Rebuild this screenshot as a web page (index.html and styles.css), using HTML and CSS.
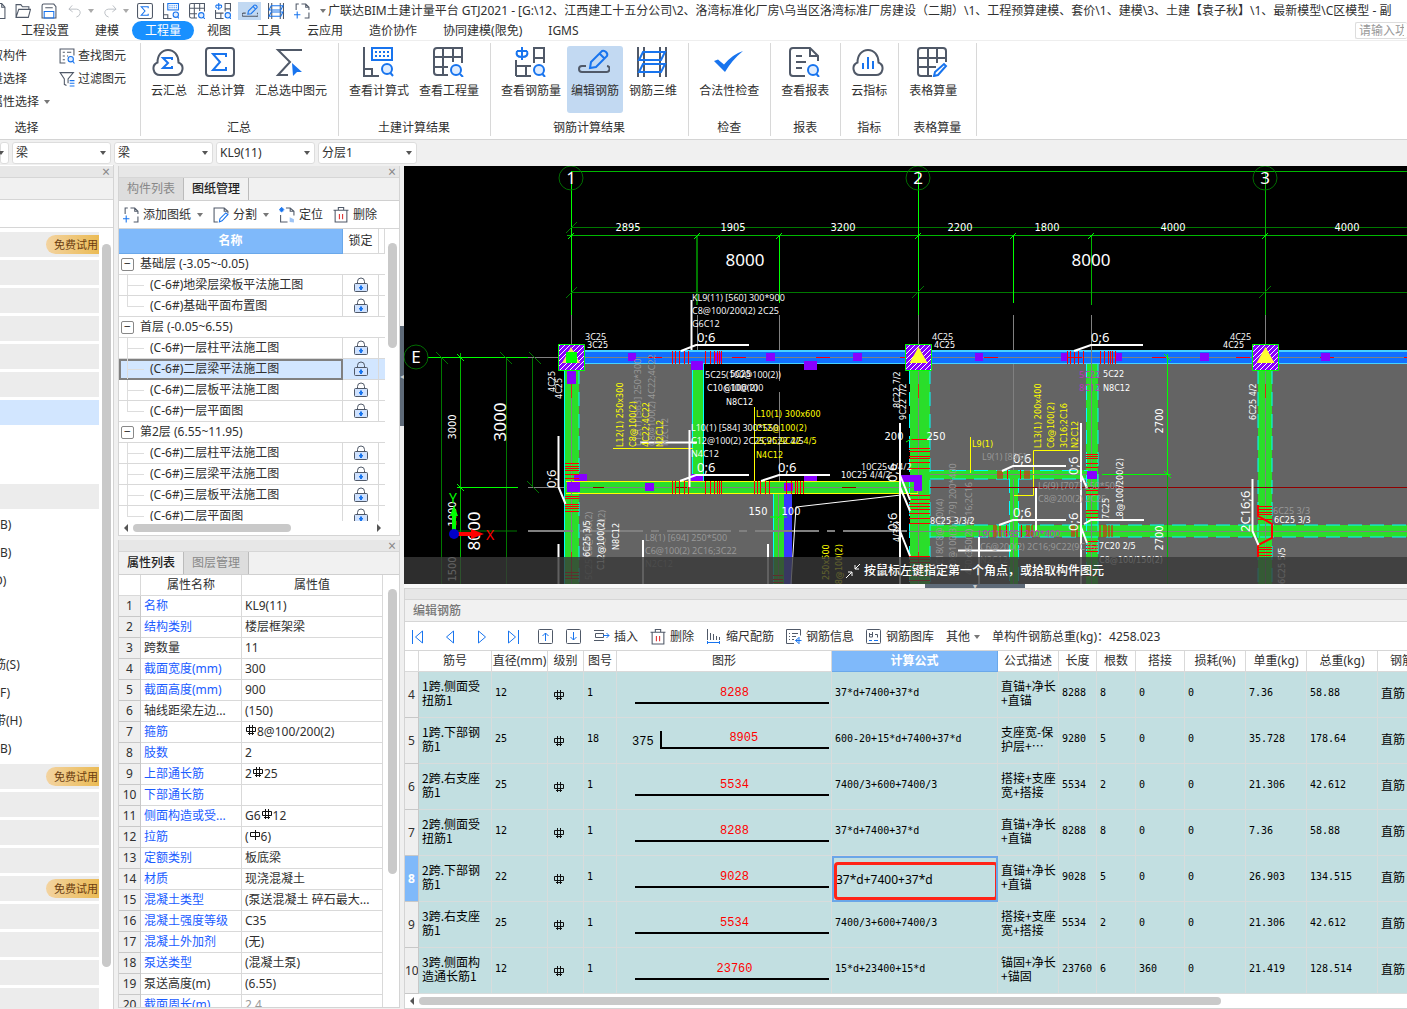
FILE: index.html
```html
<!DOCTYPE html>
<html lang="zh-CN">
<head>
    <meta charset="UTF-8">
    <meta name="viewport" content="width=device-width, initial-scale=1.0">
    <title>广联达BIM土建计量平台 GTJ2021</title>
    <link rel="stylesheet" href="styles.css">
</head>
<body>
    <!-- shared icons -->
    <svg class="defs" width="0" height="0">
        <symbol id="i-cloudsum" viewBox="0 0 32 30"><path class="d" d="M8 28a6.500 6.500 0 0 1-2.500-12.500C5.500 8 10 3 16 3s10.500 5 10.500 12.500A6.500 6.500 0 0 1 24 28z"/><path class="b" d="M20 13v-2h-9l5 5-5 5h9v-2"/></symbol>
        <symbol id="i-sigma" viewBox="0 0 30 30"><rect class="d" x="1" y="1" width="28" height="28" rx="3"/><path class="b" d="M21 10V7H8l7 8-7 8h13v-3"/></symbol>
        <symbol id="i-sumsel" viewBox="0 0 30 30"><path class="d" d="M27 3H3l12 12L3 28h10"/><path class="bf" d="M17 16l10 9-5 0-4 4z"/></symbol>
        <symbol id="i-formula" viewBox="0 0 30 30"><path class="d" d="M1 0v29h8v-7H1M9 29h7"/><rect class="b" x="9" y="1" width="20" height="12"/><path class="b dot" d="M12 5h15M12 9h15"/><circle class="lens" cx="24" cy="22" r="5"/><path class="b" d="M27.500 26l2.500 3"/></symbol>
        <symbol id="i-qty" viewBox="0 0 30 30"><path class="d" d="M15 28H4q-3 0-3-3V4q0-3 3-3h25v15M1 10h28M1 20h14M10 1v27M20 1v14"/><circle class="lens" cx="23" cy="23" r="5"/><path class="b" d="M27 27l3 3"/></symbol>
        <symbol id="i-rebar" viewBox="0 0 30 30"><path class="d" d="M19 16V1h10v15M19 11h10M1 13v16M1 19h15M1 29h15M11 19v10"/><path class="b" d="M7 0v13M2 4q-2 6 5 6 7 0 5-6M2 4h10"/><circle class="lens" cx="24" cy="23" r="5"/><path class="b" d="M27.500 27l2.500 3"/></symbol>
        <symbol id="i-edit" viewBox="0 0 30 30"><path class="d" d="M7 19H3a3 3 0 0 0 0 6h24a3 3 0 0 0 1-6"/><path class="b" d="M11 21l1-6L23 4q2-1 4 1t1 4L17 20zM21 7l5 5"/></symbol>
        <symbol id="i-three" viewBox="0 0 30 30"><path class="d" d="M1 0v30M7 0v30M23 0v30M29 0v30"/><path class="b" d="M6 5h22l-4 8H2zM6 17h22l-4 8H2z"/></symbol>
        <symbol id="i-check" viewBox="0 0 32 30"><path class="bf" d="M2 14l4-1.500 6 5Q21 7 31 4 20 13 13 25z"/></symbol>
        <symbol id="i-report" viewBox="0 0 30 30"><path class="d" d="M16 29H4q-3 0-3-3V4q0-3 3-3h17l8 8v5M21 1v8h8M7 9h6M7 15h10M7 21h6"/><circle class="lens" cx="24" cy="23" r="5"/><path class="b" d="M27.500 27l2.500 3"/></symbol>
        <symbol id="i-cloudbar" viewBox="0 0 32 30"><path class="d" d="M8 28a6.500 6.500 0 0 1-2.500-12.500C5.500 8 10 3 16 3s10.500 5 10.500 12.500A6.500 6.500 0 0 1 24 28z"/><path class="b" d="M11 16v6M16 10v12M21 14v8"/></symbol>
        <symbol id="i-tablecalc" viewBox="0 0 30 30"><path class="d" d="M15 29H4q-3 0-3-3V4q0-3 3-3h22q3 0 3 3v11M1 11h28M1 20h18M11 1v28M20 1v15"/><path class="b" d="M17 29l1-4 9-8 2 2-8 9z"/></symbol>
        <symbol id="i-adddoc" viewBox="0 0 30 30"><path class="d" d="M4 13V2h5M14 2h8l6 6v5M22 2v6h6M28 18v10h-8"/><path class="b" d="M0 22h12M6 16v13"/></symbol>
        <symbol id="i-split" viewBox="0 0 30 30"><path class="d" d="M9 28H2V2h19l7 6v4M21 2v6h7"/><path class="b" d="M12 28l1-6L24 11l4 3-11 12z"/></symbol>
        <symbol id="i-locate" viewBox="0 0 30 30"><path class="d" d="M3 15v13h13M13 2h8l7 6v8M21 2v6h7"/><path class="b" d="M5 0v10M0 5h10M2 2l6 6M8 2l-6 6"/><path class="lb" d="M20 28v-9l8 4v6z"/></symbol>
        <symbol id="i-trash" viewBox="0 0 30 30"><path class="d" d="M1 6h28M10 5V1h10v4M4 7v21h22V7"/><path class="r" d="M12 13v10M18 13v10"/></symbol>
        <symbol id="i-find" viewBox="0 0 30 30"><path class="d" d="M12 28H2V2h26v12M7 8h4M15 8h8M7 15h4M15 15h2M7 22h4"/><circle class="lens" cx="22" cy="21" r="5"/><path class="b" d="M26 25l3 4"/></symbol>
        <symbol id="i-filter" viewBox="0 0 30 30"><path class="d" d="M14 27l-4-2V15L2 3h25L17 15v8"/><path class="b" d="M20 18h9M20 23h9M20 28h9"/></symbol>
        <symbol id="i-open" viewBox="0 0 30 30"><path class="d" d="M2 27V3h9l3 4h12v5M2 27L7 12h22l-4 15z"/></symbol>
        <symbol id="i-save" viewBox="0 0 30 30"><path class="d" d="M2 28V5q0-3 3-3h19l4 5v21zM8 9h14"/><path class="b" d="M6 28V16h18v12z"/></symbol>
        <symbol id="i-undo" viewBox="0 0 30 30"><path class="g" d="M9 3L2 11l8 6M2 11h16q9 1 8 9-1 6-8 8"/></symbol>
        <symbol id="i-redo" viewBox="0 0 30 30"><path class="g" d="M21 3l7 8-8 6M28 11H12q-9 1-8 9 1 6 8 8"/></symbol>
        <symbol id="i-doc" viewBox="0 0 30 30"><path class="d" d="M4 1h18l6 7v21H4zM22 1v7h6"/></symbol>
        <symbol id="i-lock" viewBox="0 0 16 16"><path class="thin" d="M4.500 6V4.500a3.500 3.500 0 0 1 7 0V6"/><rect class="lockbox" x="1.500" y="6.500" width="13" height="8" rx="1"/><path class="bf" d="M7 8.500h2V10h1v1.500H9V13H7v-1.500H6V10h1z"/></symbol>
        <symbol id="i-hrb" viewBox="0 0 12 12"><path class="k" d="M1.500 3.500h9v4h-9zM4.500 1v10M7.500 1v10M3 9.500h6"/></symbol>
        <symbol id="i-hpb" viewBox="0 0 12 12"><path class="k" d="M1.500 3.500h9v4h-9zM6.500 1v10"/></symbol>
        <symbol id="i-first" viewBox="0 0 16 16"><path class="b1" d="M2.500 1v14M12.500 2v12L5.500 8z"/></symbol>
        <symbol id="i-prev" viewBox="0 0 16 16"><path class="b1" d="M11.500 2v12l-7-6z"/></symbol>
        <symbol id="i-next" viewBox="0 0 16 16"><path class="b1" d="M4.500 2v12l7-6z"/></symbol>
        <symbol id="i-last" viewBox="0 0 16 16"><path class="b1" d="M12.500 1v14M2.500 2v12l7-6z"/></symbol>
        <symbol id="i-up" viewBox="0 0 16 16"><rect class="thin" x=".5" y=".5" width="14" height="14" rx="1"/><path class="b1" d="M7.500 12V4M4.500 7l3-3 3 3"/></symbol>
        <symbol id="i-down" viewBox="0 0 16 16"><rect class="thin" x=".5" y=".5" width="14" height="14" rx="1"/><path class="b1" d="M7.500 3v8M4.500 8l3 3 3-3"/></symbol>
        <symbol id="i-insert" viewBox="0 0 16 16"><path class="thin" d="M0 1.500h10M0 11.500h10M1.500 4.500h8v4h-8z"/><path class="b1" d="M9 6.500h6M12.500 4L15 6.500 12.500 9"/></symbol>
        <symbol id="i-scale" viewBox="0 0 16 16"><path class="thin" d="M1.500 0v11M4.500 4v7M7.500 5v6M10.500 7v4M13.500 8v3"/><path class="b1" d="M1 13.500h13M1.500 12v3M13.500 12v3"/></symbol>
        <symbol id="i-info" viewBox="0 0 16 16"><path class="thin" d="M8 14.500H.5V.5h14v6M3 4.500h1M6 4.500h6M3 7.500h1M6 7.500h4M3 10.500h1M6 10.500h2"/><path class="b1" d="M13 8v7M9.500 11.500h6M12.500 9l-3 2.500 3 2.500"/></symbol>
        <symbol id="i-lib" viewBox="0 0 16 16"><rect class="thin" x=".5" y=".5" width="14" height="14" rx="1"/><path class="thin" d="M3.500 4v4h3V3M3.500 5.500h3M9 5.500h2.500v3"/><path class="b1" d="M3 11.500h3M8 11.500h4"/></symbol>
    </svg>

    <header class="titlebar">
        <button class="qbtn first" aria-label="新建"><svg><use href="#i-doc"/></svg></button>
        <button class="qbtn" aria-label="打开"><svg><use href="#i-open"/></svg></button>
        <button class="qbtn" aria-label="保存"><svg><use href="#i-save"/></svg></button>
        <button class="qbtn drop" aria-label="撤销"><svg><use href="#i-undo"/></svg><i class="caret"></i></button>
        <button class="qbtn drop" aria-label="恢复"><svg><use href="#i-redo"/></svg><i class="caret"></i></button>
        <button class="qbtn" aria-label="汇总计算"><svg><use href="#i-sigma"/></svg></button>
        <button class="qbtn" aria-label="查看计算式"><svg><use href="#i-formula"/></svg></button>
        <button class="qbtn" aria-label="查看工程量"><svg><use href="#i-qty"/></svg></button>
        <button class="qbtn" aria-label="查看钢筋量"><svg><use href="#i-rebar"/></svg></button>
        <button class="qbtn on" aria-label="编辑钢筋"><svg><use href="#i-edit"/></svg></button>
        <button class="qbtn" aria-label="钢筋三维"><svg><use href="#i-three"/></svg></button>
        <button class="qbtn" aria-label="添加图纸"><svg><use href="#i-adddoc"/></svg></button>
        <i class="caret more"></i>
        <span class="title">广联达BIM土建计量平台 GTJ2021 - [G:\12、江西建工十五分公司\2、洛湾标准化厂房\乌当区洛湾标准厂房建设（二期）\1、工程预算建模、套价\1、建模\3、土建【袁子秋】\1、最新模型\C区模型 - 副</span>
    </header>

    <nav class="tabs">
        <a href="#">工程设置</a>
        <a href="#">建模</a>
        <a href="#" class="on">工程量</a>
        <a href="#">视图</a>
        <a href="#">工具</a>
        <a href="#">云应用</a>
        <a href="#">造价协作</a>
        <a href="#">协同建模(限免)</a>
        <a href="#">IGMS</a>
        <input class="search" type="text" placeholder="请输入功能名称" aria-label="搜索功能">
    </nav>

    <section class="ribbon">
        <div class="group pick">
            <div class="picks">
                <div class="pickcol">
                    <button>取构件</button>
                    <button>量选择</button>
                    <button>属性选择 <i class="caret"></i></button>
                </div>
                <div class="pickcol">
                    <button><svg><use href="#i-find"/></svg>查找图元</button>
                    <button><svg><use href="#i-filter"/></svg>过滤图元</button>
                </div>
            </div>
            <div class="gname">选择</div>
        </div>
        <div class="group">
            <div class="btns">
                <button><svg><use href="#i-cloudsum"/></svg>云汇总</button>
                <button><svg><use href="#i-sigma"/></svg>汇总计算</button>
                <button><svg><use href="#i-sumsel"/></svg>汇总选中图元</button>
            </div>
            <div class="gname">汇总</div>
        </div>
        <div class="group">
            <div class="btns">
                <button><svg><use href="#i-formula"/></svg>查看计算式</button>
                <button><svg><use href="#i-qty"/></svg>查看工程量</button>
            </div>
            <div class="gname">土建计算结果</div>
        </div>
        <div class="group">
            <div class="btns">
                <button><svg><use href="#i-rebar"/></svg>查看钢筋量</button>
                <button class="on"><svg><use href="#i-edit"/></svg>编辑钢筋</button>
                <button><svg><use href="#i-three"/></svg>钢筋三维</button>
            </div>
            <div class="gname">钢筋计算结果</div>
        </div>
        <div class="group">
            <div class="btns"><button><svg><use href="#i-check"/></svg>合法性检查</button></div>
            <div class="gname">检查</div>
        </div>
        <div class="group">
            <div class="btns"><button><svg><use href="#i-report"/></svg>查看报表</button></div>
            <div class="gname">报表</div>
        </div>
        <div class="group">
            <div class="btns"><button><svg><use href="#i-cloudbar"/></svg>云指标</button></div>
            <div class="gname">指标</div>
        </div>
        <div class="group last">
            <div class="btns"><button><svg><use href="#i-tablecalc"/></svg>表格算量</button></div>
            <div class="gname">表格算量</div>
        </div>
    </section>

    <div class="combos">
        <label class="combo cut"><select aria-label="楼层"><option></option></select></label>
        <label class="combo"><select aria-label="构件大类"><option>梁</option></select></label>
        <label class="combo"><select aria-label="构件类型"><option>梁</option></select></label>
        <label class="combo"><select aria-label="构件"><option>KL9(11)</option></select></label>
        <label class="combo"><select aria-label="分层"><option>分层1</option></select></label>
    </div>

    <main>
        <aside class="nav">
            <div class="strip"><button aria-label="关闭">×</button></div>
            <div class="navtab"></div>
            <div class="navtools"></div>
            <div class="navbody">
                <ul>
                    <li class="bar"><span class="trial">免费试用</span></li>
                    <li class="bar"></li><li class="bar"></li><li class="bar"></li><li class="bar"></li><li class="bar"></li>
                    <li class="bar sel"></li>
                    <li></li><li></li>
                    <li class="bar"></li>
                    <li>B)</li>
                    <li>B)</li>
                    <li class="c">D)</li>
                    <li></li><li></li>
                    <li class="c">筋(S)</li>
                    <li>F)</li>
                    <li class="c">带(H)</li>
                    <li>B)</li>
                    <li class="bar"><span class="trial">免费试用</span></li>
                    <li class="bar"></li><li class="bar"></li><li class="bar"></li>
                    <li class="bar"><span class="trial">免费试用</span></li>
                    <li class="bar"></li><li class="bar"></li><li class="bar"></li><li class="bar"></li>
                </ul>
                <div class="vscroll nv"><i></i></div>
            </div>
        </aside>

        <div class="mid">
            <section class="panel drawings">
                <div class="strip"><button aria-label="关闭">×</button></div>
                <div class="ptabs"><button>构件列表</button><button class="on">图纸管理</button></div>
                <div class="ptools">
                    <button><svg><use href="#i-adddoc"/></svg>添加图纸<i class="caret"></i></button>
                    <button><svg><use href="#i-split"/></svg>分割<i class="caret"></i></button>
                    <button><svg><use href="#i-locate"/></svg>定位</button>
                    <button><svg><use href="#i-trash"/></svg>删除</button>
                </div>
                <div class="pbody">
                    <div class="clip">
                        <table class="tree">
                            <thead><tr><th class="hl">名称</th><th>锁定</th><th class="rest"></th></tr></thead>
                            <tbody>
                                <tr class="floor"><td colspan="3"><button class="fold">−</button>基础层 (-3.05~-0.05)</td></tr>
                                <tr><td>(C-6#)地梁层梁板平法施工图</td><td><svg><use href="#i-lock"/></svg></td><td></td></tr>
                                <tr class="end"><td>(C-6#)基础平面布置图</td><td><svg><use href="#i-lock"/></svg></td><td></td></tr>
                                <tr class="floor"><td colspan="3"><button class="fold">−</button>首层 (-0.05~6.55)</td></tr>
                                <tr><td>(C-6#)一层柱平法施工图</td><td><svg><use href="#i-lock"/></svg></td><td></td></tr>
                                <tr class="cur"><td>(C-6#)二层梁平法施工图</td><td><svg><use href="#i-lock"/></svg></td><td></td></tr>
                                <tr><td>(C-6#)二层板平法施工图</td><td><svg><use href="#i-lock"/></svg></td><td></td></tr>
                                <tr class="end"><td>(C-6#)一层平面图</td><td><svg><use href="#i-lock"/></svg></td><td></td></tr>
                                <tr class="floor"><td colspan="3"><button class="fold">−</button>第2层 (6.55~11.95)</td></tr>
                                <tr><td>(C-6#)二层柱平法施工图</td><td><svg><use href="#i-lock"/></svg></td><td></td></tr>
                                <tr><td>(C-6#)三层梁平法施工图</td><td><svg><use href="#i-lock"/></svg></td><td></td></tr>
                                <tr><td>(C-6#)三层板平法施工图</td><td><svg><use href="#i-lock"/></svg></td><td></td></tr>
                                <tr class="end"><td>(C-6#)二层平面图</td><td><svg><use href="#i-lock"/></svg></td><td></td></tr>
                            </tbody>
                        </table>
                    </div>
                    <div class="vscroll dv"><i></i></div>
                </div>
                <div class="hscroll dh"><b class="l"></b><i></i><b class="r"></b></div>
            </section>

            <section class="panel props">
                <div class="strip"><button aria-label="关闭">×</button></div>
                <div class="ptabs"><button class="on">属性列表</button><button>图层管理</button></div>
                <div class="pbody">
                    <div class="clip">
                        <table class="prop">
                            <thead><tr><th></th><th>属性名称</th><th>属性值</th></tr></thead>
                            <tbody>
                                <tr><th>1</th><td>名称</td><td>KL9(11)</td></tr>
                                <tr><th>2</th><td>结构类别</td><td>楼层框架梁</td></tr>
                                <tr class="ro"><th>3</th><td>跨数量</td><td>11</td></tr>
                                <tr><th>4</th><td>截面宽度(mm)</td><td>300</td></tr>
                                <tr><th>5</th><td>截面高度(mm)</td><td>900</td></tr>
                                <tr class="ro"><th>6</th><td>轴线距梁左边...</td><td>(150)</td></tr>
                                <tr><th>7</th><td>箍筋</td><td><svg class="hrb"><use href="#i-hrb"/></svg>8@100/200(2)</td></tr>
                                <tr><th>8</th><td>肢数</td><td>2</td></tr>
                                <tr><th>9</th><td>上部通长筋</td><td>2<svg class="hrb"><use href="#i-hrb"/></svg>25</td></tr>
                                <tr><th>10</th><td>下部通长筋</td><td></td></tr>
                                <tr><th>11</th><td>侧面构造或受...</td><td>G6<svg class="hrb"><use href="#i-hrb"/></svg>12</td></tr>
                                <tr><th>12</th><td>拉筋</td><td>(<svg class="hrb"><use href="#i-hpb"/></svg>6)</td></tr>
                                <tr><th>13</th><td>定额类别</td><td>板底梁</td></tr>
                                <tr><th>14</th><td>材质</td><td>现浇混凝土</td></tr>
                                <tr><th>15</th><td>混凝土类型</td><td>(泵送混凝土 碎石最大...</td></tr>
                                <tr><th>16</th><td>混凝土强度等级</td><td>C35</td></tr>
                                <tr><th>17</th><td>混凝土外加剂</td><td>(无)</td></tr>
                                <tr><th>18</th><td>泵送类型</td><td>(混凝土泵)</td></tr>
                                <tr class="ro"><th>19</th><td>泵送高度(m)</td><td>(6.55)</td></tr>
                                <tr class="calc"><th>20</th><td>截面周长(m)</td><td>2.4</td></tr>
                            </tbody>
                        </table>
                    </div>
                    <div class="vscroll pv"><i></i></div>
                </div>
            </section>
        </div>

        <div class="splitter"><button aria-label="收起">◂</button></div>

        <div class="work">
            <div class="canvas">
                <svg class="plan" viewBox="404 166 1003 418" preserveAspectRatio="xMinYMin slice">
                    <defs>
                        <pattern id="hatch" width="5" height="5" patternUnits="userSpaceOnUse"><rect width="5" height="5" fill="#8a00ff"/><path d="M-1 6L6-1M-1 1l2-2M4 6l2-2" stroke="#fff" stroke-width="1.500"/></pattern>
                    </defs>
                    <rect x="404" y="166" width="1003" height="418" fill="#000"/>
                    <!-- slabs -->
                    <path fill="#646464" d="M579 364h113v117H579zM579 494h194v90H579zM930 364h477v220H930z"/>
                    <!-- grid and dimension lines -->
                    <path class="g2" d="M571 171.500h836M567 235.500h840M460.500 353v231"/>
                    <path class="g3" d="M571 227.500h836M571 292.500h836M441.500 357v227M506.500 357v227M532.500 357v130M457 531h60"/>
                    <path class="g3 w2" d="M697 235v70"/>
                    <path class="g1" d="M571.500 171v144M918.500 171v144M779.500 235v68M1013.500 235v68M428 357.500h102M457 487.500h61"/>
                    <path class="g2" d="M1265.500 171v144M1091.500 235v70"/>
                    <path class="gy" d="M571.500 315v30M918.500 315v30M1265.500 315v30M697.500 315v50M779.500 315v66M779.500 392v90M1013.500 315v155M528 487.500h40M528 357.500h30"/>
                    <path class="g3" d="M566 233l11-11M566 298l11-11M912 298l12-12M1259 298l12-12M436 352l12 12M500 352l12 12M529 352l12 12M527 481l12 12"/>
                    <path class="g1" d="M568 239l6-6M694 239l6-6M776 239l6-6M915 239l6-6M1010 239l6-6M1088 239l6-6M1262 239l6-6M457 354l7 7M457 484l7 7"/>
                    <g class="axis"><circle cx="571" cy="178" r="12"/><circle cx="918" cy="178" r="12"/><circle cx="1265" cy="178" r="12"/><circle cx="416" cy="357" r="12"/></g>
                    <g class="axt"><text x="571" y="184">1</text><text x="918" y="184">2</text><text x="1265" y="184">3</text><text x="416" y="363">E</text></g>

                    <!-- beams -->
                    <g fill="#2ade2a">
                        <path d="M773 494h11v90h-11zM1010 479h8v105h-8zM930 470h158v9H930zM930 525h477v12H930z"/>
                        <path d="M565 370h14v214h-14zM692 364h11v117h-11zM910 370h20v214h-20zM1086 364h12v220h-12zM1258 370h14v214h-14z"/>
                        <path d="M566 481h352v13H566z"/>
                    </g>
                    <path fill="#3838ff" d="M784 494h8v90h-8z"/>
                    <path fill="#1070ff" d="M585 351h822v13H585z"/>
                    <path class="lc" d="M585 350.500h822M585 351.500h822M585 363.500h822"/>
                    <path class="cy" d="M564.500 370v214M692.500 364v117M703.500 364v117M773.500 494v90"/>
                    <path class="cy ds" d="M579 370v214M909.500 370v214M930 370v214M1009.500 479v105M1018.500 479v105M1086.500 364v220M1098 364v220M1258 370v214M1272 370v214M930 470.500h158M930 479h158M930 525h477M930 537h477"/>
                    <path class="ye" d="M566 481.500h352v12H566"/>
                    <path class="ye" d="M754.500 407v81M613 448.500h80M970.500 437v36M1014 495.500h19.500V450.500h46"/>
                    <path class="gy" d="M585 357.500h822M571.500 371v213M566 487.500h352M918.500 371v213M930 474.500h158M1265.500 371v213M1091.500 315v269M778.500 494v90M1013.500 479v105"/>
                    <path class="gy w2 ds2" d="M528 531h45M579 531h330"/>
                    <path class="gy" d="M909 531.500h498"/>
                    <path class="rd ds3" d="M648 357.500h759"/>
                    <path class="rd" d="M571.500 378v20M571.500 552v26M918.500 384v14M918.500 552v10M1265.500 384v14" opacity=".7"/>
                    <path class="dr" d="M593 487.500h11M675 487.500h12M842 487.500h14M930 487.500h477"/>
                    <g fill="#8800ff">
                        <path d="M628 353h8v8h-8zM766 353h9v8h-9zM853 353h9v8h-9zM975 353h8v8h-8zM1061 353h6v8h-6zM1116 353h6v8h-6zM1200 353h9v8h-9zM1321 353h9v8h-9zM714 353h8v8h-8z"/>
                        <path d="M691 361h12v9h-12zM804 361h13v9h-13zM567 370h9v14h-9zM574 474h13v7h-13zM567 482h13v10h-13zM645 483h9v8h-9zM691 474h12v7h-12zM804 475h13v6h-13zM784 483h9v8h-9zM901 475h21v7h-21zM914 482h8v9h-8zM1087 471h10v8h-10z"/>
                    </g>
                    <!-- stirrups -->
                    <path class="rd" d="M672.500 351v13M675.500 351v13M679.500 351v13M684.500 351v13M688.500 351v13M705.500 351v13M710.500 351v13M714.500 351v13M717.500 351v13M719.500 351v13M721.500 351v13M1067.500 351v13M1070.500 351v13M1074.500 351v13M1078.500 351v13M1083.500 351v13M1100.500 351v13M1104.500 351v13M1108.500 351v13M1110.500 351v13M1112.500 351v13M1115.500 351v13"/>
                    <path class="rd" d="M672.500 481v13M675.500 481v13M679.500 481v13M684.500 481v13M688.500 481v13M705.500 481v13M710.500 481v13M714.500 481v13M717.500 481v13M719.500 481v13M721.500 481v13M754.500 481v13M757.500 481v13M760.500 481v13M765.500 481v13M769.500 481v13M786.500 481v13M791.500 481v13M795.500 481v13M797.500 481v13M800.500 481v13M803.500 481v13"/>
                    <path class="rd" d="M565 463.500h14M565 466.500h14M565 468.500h14M565 470.500h14M565 474.500h14M565 478.500h14M565 496.500h14M565 498.500h14M565 504.500h14M565 506.500h14M565 508.500h14M565 511.500h14M565 572.500h14M565 575.500h14M565 578.500h14M773 575.500h10M773 579.500h10M773 582.500h10"/>
                    <path class="rd" d="M909 439.500h21M909 448.500h21M909 451.500h21M909 456.500h21M909 458.500h21M909 462.500h21M909 468.500h21M909 495.500h21M909 499.500h21M909 503.500h21M909 506.500h21M909 509.500h21M909 513.500h21M909 518.500h21M909 523.500h21M909 556.500h21M909 559.500h21M909 562.500h21M909 566.500h21M909 570.500h21M909 575.500h21M909 580.500h21"/>
                    <path class="rd" d="M998 470v9M1000 470v9M1002 470v9M1007.500 470v9M1020.500 470v9M1025 470v9M1027 470v9M1029 470v9M994 525v12M996 525v12M1000 525v12M1006.500 525v12M1021.500 525v12M1027 525v12M1029 525v12M1032 525v12M1072 525v12M1074 525v12M1077 525v12M1100 525v12M1104 525v12M1106 525v12M1109 525v12M1112 525v12"/>
                    <path class="rd" d="M1086 454.500h12M1086 456.500h12M1086 458.500h12M1086 463.500h12M1086 467.500h12M1086 488.500h12M1086 490.500h12M1086 494.500h12M1086 510.500h12M1086 513.500h12M1086 517.500h12M1086 541.500h12M1086 545.500h12M1086 548.500h12M1086 551.500h12M1086 570.500h12M1086 575.500h12M1258 506.500h14M1258 509.500h14M1258 512.500h14M1258 514.500h14M1258 519.500h14M1258 547.500h14M1258 549.500h14M1258 552.500h14M1258 555.500h14"/>
                    <path class="rd w2" d="M1258 505v11l14 8v14l-14 7v12"/>
                    <!-- columns -->
                    <g fill="url(#hatch)" stroke="#00ff00"><path d="M558.500 344.500h26v26h-26zM905.500 344.500h26v26h-26zM1252.500 344.500h26v26h-26z"/></g>
                    <path fill="#f0e060" d="M571 347l9 16h-18z"/><path fill="#00ff00" d="M566 352h11v11h-11z"/>
                    <path fill="#ffff30" d="M918.500 347l9 16h-18zM1265.500 347l9 16h-18z"/>
                    <!-- small dims -->
                    <path class="g1" d="M1167.500 354v121M1102 474.500h69M1164 354l7 7M1164 471l7 7M770 517h17M776 520l6-6M906 442l7-4"/>
                    <path class="g2" d="M1167.500 475v109"/>
                    <path class="wl" d="M791 584l5-77 105-12"/>
                    <!-- leaders -->
                    <path class="wl w2" d="M691.500 300v50M681 351l15-6h53M689.500 430v57M680 481l16-6h53M761 481l18-6h51M640 442.500h57M1002 471l11-5h53M999 525l14-5h53M1074 351l17-6h52M1084 524l7-4h53M558.500 436v51l7 17M558.500 544v40M1252.500 479v52l6 14M900 423v161M900 475l10 25M900 487l10 24M900 531l10 25M1081 423v161M1081 475l6 13M1081 527l6 16M643 540v44M768 544v40M979 537v47M1036 488v43M958 550.500h53"/>

                    <g class="cad">
                        <text x="628" y="231">2895</text><text x="733" y="231">1905</text><text x="843" y="231">3200</text><text x="960" y="231">2200</text><text x="1047" y="231">1800</text><text x="1173" y="231">4000</text><text x="1347" y="231">4000</text>
                        <text transform="translate(456 427) rotate(-90)">3000</text><text transform="translate(456 514) rotate(-90)">1000</text><text transform="translate(456 569) rotate(-90)">1500</text>
                        <text transform="translate(1163 421) rotate(-90)">2700</text><text transform="translate(1163 538) rotate(-90)">2700</text>
                        <text x="758" y="515">150</text><text x="791" y="515">100</text><text x="894" y="440">200</text><text x="936" y="440">250</text>
                    </g>
                    <g class="big">
                        <text x="745" y="266">8000</text><text x="1091" y="266">8000</text>
                        <text transform="translate(506 422) rotate(-90)">3000</text><text transform="translate(480 531) rotate(-90)">8000</text>
                    </g>
                    <g class="mid6">
                        <text x="697" y="342">0;6</text><text x="697" y="472">0;6</text><text x="778" y="472">0;6</text><text x="1091" y="342">0;6</text><text x="1013" y="463">0;6</text><text x="1013" y="517">0;6</text>
                        <text transform="translate(556 488) rotate(-90)">0;6</text><text transform="translate(897 482) rotate(-90)">0;6</text><text transform="translate(897 531) rotate(-90)">0;6</text><text transform="translate(1078 475) rotate(-90)">0;6</text><text transform="translate(1078 531) rotate(-90)">0;6</text>
                        <text transform="translate(1250 532) rotate(-90)">2C16;6</text>
                    </g>
                    <g class="note">
                        <text x="692" y="301">KL9(11) [560] 300*900</text><text x="692" y="314">C8@100/200(2) 2C25</text><text x="692" y="327">G6C12</text>
                        <text x="705" y="378">5C25(100@100(2))</text><text x="724" y="391">C10@100</text>
                        <text x="691" y="431">L10(1) [584] 300*550</text><text x="691" y="444">C12@100(2) 2C25;9C22 4/5</text><text x="691" y="457">N4C12</text>
                        <text x="585" y="340">3C25</text><text x="932" y="340">4C25</text><text x="1230" y="340">4C25</text><text x="861" y="470">10C25 4/4/2</text>
                    </g>
                    <g class="note dim">
                        <text x="645" y="541">L8(1) [694] 250*500</text><text x="645" y="554">C6@100(2) 2C16;3C22</text><text x="645" y="567">N2C12</text>
                        <text x="982" y="460">L9(1) [896]</text><text x="1038" y="489">L6(9) [707] 250*500</text><text x="1038" y="502">C8@200(2) 2C25</text>
                        <text x="980" y="550">C6@200(2) 2C16;9C22(9C16)</text><text x="980" y="563">N2C12</text><text x="1273" y="514">6C25 3/3</text>
                        <text transform="translate(641 446) rotate(-90)">L12(1) [563] 250*300</text><text transform="translate(655 446) rotate(-90)">C8@100(2) 4C22;4C22</text><text transform="translate(668 446) rotate(-90)">N2C12</text>
                        <text transform="translate(592 580) rotate(-90)">5C25 C8@100(2)</text><text transform="translate(605 560) rotate(-90)">C12@100(2)</text>
                        <text transform="translate(943 570) rotate(-90)">9C18(C8@100)(4)</text><text transform="translate(956 575) rotate(-90)">C10@100(3) [179] 200*400</text><text transform="translate(972 575) rotate(-90)">450x350(2) 3C16;2C16</text>
                    </g>
                    <g class="note mg"><text x="1079" y="378">5C22</text><text x="1079" y="391">8C12</text><text x="978" y="537">L9(1) [665] 200*400</text></g>
                    <g class="cadl">
                        <text x="587" y="348">3C25</text><text x="934" y="348">4C25</text><text x="1223" y="348">4C25</text><text x="730" y="377">5C25</text><text x="707" y="391">C10@100(2)</text><text x="726" y="405">N8C12</text>
                        <text x="1103" y="377">5C22</text><text x="1103" y="391">N8C12</text><text x="841" y="478">10C25 4/4/2</text><text x="930" y="524">8C25 3/3/2</text><text x="1274" y="523">6C25 3/3</text><text x="1099" y="549">7C20 2/5</text><text x="1099" y="563">C8@100/150(2)</text>
                        <text transform="translate(555 392) rotate(-90)">4C25</text><text transform="translate(562 399) rotate(-90)">4C25</text>
                        <text transform="translate(900 408) rotate(-90)">8C22 7/2</text><text transform="translate(906 420) rotate(-90)">9C22 7/2</text>
                        <text transform="translate(1256 420) rotate(-90)">6C25 4/2</text><text transform="translate(1123 521) rotate(-90)">L8@100/200(2)</text><text transform="translate(1109 519) rotate(-90)">7C25</text>
                        <text transform="translate(590 557) rotate(-90)">6C25 3/5</text><text transform="translate(604 570) rotate(-90)">C12@100(2)</text><text transform="translate(619 550) rotate(-90)">N8C12</text>
                        <text transform="translate(900 542) rotate(-90)">4/3/2</text><text transform="translate(1285 584) rotate(-90)">6C25 5/5</text>
                    </g>
                    <g class="cadl yl">
                        <text transform="translate(623 447) rotate(-90)">L12(1) 250x300</text><text transform="translate(636 447) rotate(-90)">C8@100(2)</text><text transform="translate(649 447) rotate(-90)">4C22;4C22</text><text transform="translate(663 447) rotate(-90)">N2C12</text>
                        <text x="756" y="417">L10(1) 300x600</text><text x="756" y="431">C12@100(2)</text><text x="756" y="444">2C25;9C22 4/5</text><text x="756" y="458">N4C12</text>
                        <text x="972" y="447">L9(1)</text>
                        <text transform="translate(1041 448) rotate(-90)">L13(1) 200x400</text><text transform="translate(1054 448) rotate(-90)">C6@100(2)</text><text transform="translate(1067 448) rotate(-90)">3C16;2C16</text><text transform="translate(1078 448) rotate(-90)">N2C12</text>
                        <text transform="translate(829 580) rotate(-90)">250x500</text><text transform="translate(842 590) rotate(-90)">C8@100(2)</text>
                    </g>
                    <!-- coordinate axes -->
                    <path stroke="#00ff00" class="w4" d="M454 530v-16"/><path fill="#00ff00" d="M454 505l4 11h-8z"/>
                    <path stroke="#f00" class="w4" d="M458 534h14"/><path fill="#f00" d="M484 534l-13 5v-10z"/><circle cx="454" cy="534" r="5" fill="#0000c8"/>
                    <text x="449" y="503" class="ax ay">Y</text><text x="486" y="540" class="ax">X</text>
                </svg>
                <div class="tip">
                    <svg viewBox="0 0 16 16"><path d="M15 1l-5 5M10 2v4h4M1 15l6-6M3 9h4v4" stroke="#fff" fill="none"/></svg>
                    按鼠标左键指定第一个角点，或拾取构件图元
                </div>
            </div>
            <div class="gap"><button aria-label="收起">▾</button></div>

            <section class="dock">
                <div class="strip"></div>
                <h2>编辑钢筋</h2>
                <div class="dtools">
                    <button class="n" aria-label="首行"><svg><use href="#i-first"/></svg></button>
                    <button class="n" aria-label="上一行"><svg><use href="#i-prev"/></svg></button>
                    <button class="n" aria-label="下一行"><svg><use href="#i-next"/></svg></button>
                    <button class="n" aria-label="末行"><svg><use href="#i-last"/></svg></button>
                    <button aria-label="上移"><svg><use href="#i-up"/></svg></button>
                    <button aria-label="下移"><svg><use href="#i-down"/></svg></button>
                    <button><svg><use href="#i-insert"/></svg>插入</button>
                    <button><svg><use href="#i-trash"/></svg>删除</button>
                    <button><svg><use href="#i-scale"/></svg>缩尺配筋</button>
                    <button><svg><use href="#i-info"/></svg>钢筋信息</button>
                    <button><svg><use href="#i-lib"/></svg>钢筋图库</button>
                    <button>其他<i class="caret"></i></button>
                    <span>单构件钢筋总重(kg)：4258.023</span>
                </div>
                <div class="gridwrap">
                    <table class="bars">
                        <colgroup><col class="w14"><col class="w73"><col class="w56"><col class="w36"><col class="w33"><col class="w215"><col class="w166"><col class="w61"><col class="w38"><col class="w39"><col class="w49"><col class="w61"><col class="w61"><col class="w71"><col class="w73"></colgroup>
                        <thead>
                            <tr><th></th><th>筋号</th><th>直径(mm)</th><th>级别</th><th>图号</th><th>图形</th><th class="hl">计算公式</th><th>公式描述</th><th>长度</th><th>根数</th><th>搭接</th><th>损耗(%)</th><th>单重(kg)</th><th>总重(kg)</th><th>钢筋归类</th></tr>
                        </thead>
                        <tbody>
                            <tr><th>4</th><td class="t">1跨.侧面受扭筋1</td><td>12</td><td class="t"><svg class="lv"><use href="#i-hrb"/></svg></td><td>1</td><td><div class="shape">8288</div></td><td>37*d+7400+37*d</td><td class="t">直锚+净长+直锚</td><td>8288</td><td>8</td><td>0</td><td>0</td><td>7.36</td><td>58.88</td><td class="t">直筋</td></tr>
                            <tr><th>5</th><td class="t">1跨.下部钢筋1</td><td>25</td><td class="t"><svg class="lv"><use href="#i-hrb"/></svg></td><td>18</td><td><div class="hook"><span>375</span><div class="shape">8905</div></div></td><td>600-20+15*d+7400+37*d</td><td class="t">支座宽-保护层+…</td><td>9280</td><td>5</td><td>0</td><td>0</td><td>35.728</td><td>178.64</td><td class="t">直筋</td></tr>
                            <tr><th>6</th><td class="t">2跨.右支座筋1</td><td>25</td><td class="t"><svg class="lv"><use href="#i-hrb"/></svg></td><td>1</td><td><div class="shape">5534</div></td><td>7400/3+600+7400/3</td><td class="t">搭接+支座宽+搭接</td><td>5534</td><td>2</td><td>0</td><td>0</td><td>21.306</td><td>42.612</td><td class="t">直筋</td></tr>
                            <tr><th>7</th><td class="t">2跨.侧面受扭筋1</td><td>12</td><td class="t"><svg class="lv"><use href="#i-hrb"/></svg></td><td>1</td><td><div class="shape">8288</div></td><td>37*d+7400+37*d</td><td class="t">直锚+净长+直锚</td><td>8288</td><td>8</td><td>0</td><td>0</td><td>7.36</td><td>58.88</td><td class="t">直筋</td></tr>
                            <tr class="cur"><th>8</th><td class="t">2跨.下部钢筋1</td><td>22</td><td class="t"><svg class="lv"><use href="#i-hrb"/></svg></td><td>1</td><td><div class="shape">9028</div></td><td class="edit"><input type="text" value="37*d+7400+37*d" aria-label="计算公式"></td><td class="t">直锚+净长+直锚</td><td>9028</td><td>5</td><td>0</td><td>0</td><td>26.903</td><td>134.515</td><td class="t">直筋</td></tr>
                            <tr><th>9</th><td class="t">3跨.右支座筋1</td><td>25</td><td class="t"><svg class="lv"><use href="#i-hrb"/></svg></td><td>1</td><td><div class="shape">5534</div></td><td>7400/3+600+7400/3</td><td class="t">搭接+支座宽+搭接</td><td>5534</td><td>2</td><td>0</td><td>0</td><td>21.306</td><td>42.612</td><td class="t">直筋</td></tr>
                            <tr><th>10</th><td class="t">3跨.侧面构造通长筋1</td><td>12</td><td class="t"><svg class="lv"><use href="#i-hrb"/></svg></td><td>1</td><td><div class="shape">23760</div></td><td>15*d+23400+15*d</td><td class="t">锚固+净长+锚固</td><td>23760</td><td>6</td><td>360</td><td>0</td><td>21.419</td><td>128.514</td><td class="t">直筋</td></tr>
                        </tbody>
                    </table>
                </div>
                <div class="hscroll bh"><b class="l"></b><i></i></div>
            </section>
        </div>
    </main>
</body>
</html>
```
FILE: styles.css
```css
* {
    box-sizing: border-box;
}
body {
    margin: 0;
    height: 100vh;
    display: flex;
    flex-direction: column;
    overflow: hidden;
    background: #f0f0f0;
    color: #303030;
    font: 12px/16px "Noto Sans", "Noto Sans CJK SC", sans-serif;
}
button {
    display: flex;
    align-items: center;
    padding: 0;
    border: 0;
    background: none;
    color: inherit;
    font: inherit;
    white-space: nowrap;
}
svg {
    width: 16px;
    height: 16px;
    flex: none;
}
.defs {
    position: absolute;
}

/* icon strokes */
.d, .b, .g, .r, .lens, .thin, .b1, .k {
    fill: none;
    stroke-width: 2;
}
.d { stroke: #505968; }
.b { stroke: #1874ee; }
.g { stroke: #b8bcc2; }
.r { stroke: #e03030; }
.bf { fill: #1874ee; }
.lb { fill: #9ec4f5; }
.lens { fill: #e0edff; stroke: #1874ee; }
.dot { stroke-dasharray: 2 2; }
.thin { stroke: #505968; stroke-width: 1; }
.b1 { stroke: #1874ee; stroke-width: 1; }
.k { stroke: #111; stroke-width: 1; }
.lockbox { fill: #cfe2ff; stroke: #505968; }

.caret {
    flex: none;
    border: 3px solid transparent;
    border-top: 4px solid #777;
    border-bottom: 0;
}

/* title bar */
.titlebar {
    display: flex;
    align-items: center;
    height: 21px;
    background: #fff;
    overflow: hidden;
}
.qbtn {
    justify-content: center;
    flex: none;
    width: 26px;
    height: 18px;
}
.qbtn.first {
    width: 10px;
    justify-content: flex-end;
    padding-right: 4px;
}
.qbtn.drop {
    width: 35px;
    padding-left: 3px;
    gap: 6px;
}
.qbtn.drop .caret {
    border-top-color: #aaa;
}
.qbtn.drop svg {
    width: 14px;
    height: 14px;
}
.qbtn.on {
    width: 23px;
    margin: 0 2px;
    background: #c2d9f2;
}
.more {
    margin: 0 2px 0 5px;
}
.title {
    white-space: nowrap;
}

/* menu tabs */
.tabs {
    display: flex;
    align-items: center;
    height: 20px;
    padding-left: 8px;
    background: #fff;
    border-bottom: 1px solid #eee;
}
.tabs a {
    padding: 1px 13px 0;
    line-height: 18px;
    color: inherit;
    text-decoration: none;
    white-space: nowrap;
}
.tabs .on {
    border-radius: 10px;
    background: #1890ff;
    color: #fff;
}
.search {
    width: 52px;
    height: 17px;
    margin-left: auto;
    padding: 0 3px;
    border: 1px solid #ddd;
    border-right: 0;
    border-radius: 2px;
    font: inherit;
}
.search::placeholder {
    color: #999;
}

/* ribbon */
.ribbon {
    display: flex;
    height: 99px;
    padding-top: 2px;
    background: #fff;
    border-bottom: 1px solid #d4d4d4;
}
.group {
    display: flex;
    flex-direction: column;
    justify-content: space-between;
    height: 93px;
    padding: 3px 7px 0 6px;
    border-right: 1px solid #d8d8d8;
}
.group.last {
    width: 78px;
}
.gname {
    text-align: center;
}
.btns {
    display: flex;
    gap: 2px;
}
.btns button {
    flex-direction: column;
    gap: 6px;
    height: 67px;
    padding: 1px 4px 0;
    border-radius: 3px;
}
.btns svg {
    width: 32px;
    height: 30px;
    margin-right: 2px;
}
.btns .on {
    background: #c2d9f2;
}
.pick {
    width: 141px;
    padding: 5px 0 0;
}
.pick .gname {
    padding-right: 87px;
}
.picks {
    display: flex;
}
.pickcol {
    display: flex;
    flex-direction: column;
    gap: 7px;
}
.pickcol:first-child {
    width: 68px;
    margin-left: -9px;
}
.pickcol button {
    gap: 3px;
}
.pickcol .caret {
    margin-left: 2px;
}

/* component selectors */
.combos {
    display: flex;
    gap: 3px;
    height: 25px;
    padding-top: 2px;
}
.combo {
    position: relative;
    width: 99px;
}
.combo.cut {
    width: 9px;
}
.combo::after {
    content: "";
    position: absolute;
    right: 5px;
    top: 9px;
    border: 3px solid transparent;
    border-top: 4px solid #555;
    border-bottom: 0;
}
.combo select {
    appearance: none;
    width: 100%;
    height: 22px;
    padding: 0 3px;
    border: 1px solid #ddd;
    border-radius: 3px;
    background: #fff;
    color: inherit;
    font: inherit;
}

main {
    display: flex;
    flex: 1;
    min-height: 0;
}
.strip {
    display: flex;
    justify-content: flex-end;
    flex: none;
    height: 12px;
    background: #e7e7e7;
    border-bottom: 1px solid #d6d6d6;
}
.strip button {
    padding-right: 3px;
    color: #888;
    font-size: 14px;
    line-height: 10px;
}
.vscroll {
    width: 9px;
    margin-right: 2px;
}
.vscroll i, .hscroll i {
    display: block;
    border-radius: 5px;
    background: #c9c9c9;
}

/* left navigation */
.nav {
    display: flex;
    flex-direction: column;
    width: 114px;
    padding-top: 1px;
    border-right: 1px solid #d4d4d4;
    background: #fff;
    overflow: hidden;
}
.navtab {
    flex: none;
    height: 22px;
    background: #f1f1f1;
    border-bottom: 1px solid #d6d6d6;
}
.navtools {
    flex: none;
    height: 28px;
    border-bottom: 1px solid #d6d6d6;
}
.navbody {
    display: flex;
    gap: 3px;
    padding-top: 4px;
}
.nav ul {
    width: 99px;
    margin: 0;
    padding: 0;
    list-style: none;
}
.nav li {
    height: 25px;
    margin-bottom: 3px;
    line-height: 25px;
    white-space: nowrap;
}
.nav li.c {
    text-indent: -6px;
}
.nav .bar {
    display: flex;
    justify-content: flex-end;
    align-items: center;
    background: #ececec;
}
.nav .sel {
    background: #d2e6ff;
}
.trial {
    padding: 0 1px 0 8px;
    border-radius: 10px 0 0 10px;
    background: linear-gradient(90deg, #f3d3a0, #ebbb55);
    color: #6b3d10;
    font-size: 11px;
    line-height: 19px;
}
.nv {
    padding-top: 12px;
}
.nv i {
    height: 723px;
}

/* middle panels */
.mid {
    display: flex;
    flex-direction: column;
    gap: 4px;
    width: 282px;
    margin-left: 4px;
    padding-top: 1px;
}
.panel {
    display: flex;
    flex-direction: column;
    border: 1px solid #d4d4d4;
    border-top: 0;
    background: #fff;
}
.drawings {
    flex: none;
    height: 370px;
}
.props {
    flex: 1;
    min-height: 0;
    margin-bottom: 1px;
}
.ptabs {
    display: flex;
    flex: none;
    height: 23px;
    background: #f1f1f1;
    border-bottom: 1px solid #d0d0d0;
}
.ptabs button {
    width: 65px;
    justify-content: center;
    border-right: 1px solid #bbb;
    background: #ddd;
    color: #888;
}
.ptabs .on {
    background: #f1f1f1;
    color: #222;
    font-weight: 500;
}
.ptools {
    display: flex;
    gap: 10px;
    flex: none;
    height: 28px;
    padding-left: 4px;
    border-bottom: 1px solid #d6d6d6;
}
.ptools button {
    gap: 4px;
}
.ptools .caret {
    margin-left: 2px;
}
.pbody {
    display: flex;
    flex: 1;
    min-height: 0;
}
.clip {
    flex: 1;
    overflow: hidden;
}
table {
    border-collapse: separate;
    border-spacing: 0;
    table-layout: fixed;
}
th {
    font-weight: 400;
}
td, th {
    padding: 0;
    border: 0 solid #d9d9d9;
    border-width: 0 1px 1px 0;
    white-space: nowrap;
    overflow: hidden;
}
.hl {
    border-color: #6aa8ea;
    background: #7fb9fa;
    color: #fff;
    font-weight: 700;
}
.tree {
    width: 266px;
}
.tree th {
    width: 36px;
    height: 25px;
}
.tree .hl {
    width: 224px;
}
.tree .rest {
    width: 6px;
}
.tree td {
    height: 21px;
    padding-left: 31px;
    position: relative;
}
.tree td + td {
    padding: 0;
    text-align: center;
}
.tree td:last-child {
    border-right: 0;
}
.tree svg {
    display: block;
    margin: auto;
}
.tree .floor td {
    padding-left: 2px;
}
.fold {
    display: inline-flex;
    justify-content: center;
    width: 13px;
    height: 13px;
    margin-right: 6px;
    border: 1px solid #888;
    border-radius: 2px;
    line-height: 10px;
    vertical-align: 0;
}
.tree tr:not(.floor) td:first-child::before {
    content: "";
    position: absolute;
    left: 8px;
    top: 0;
    width: 16px;
    height: 10px;
    border: 1px solid #ddd;
    border-width: 0 0 1px 1px;
}
.tree tr:not(.floor):not(.end) td:first-child::after {
    content: "";
    position: absolute;
    left: 8px;
    top: 10px;
    height: 11px;
    border-left: 1px solid #ddd;
}
.tree .cur td {
    background: #d2e6ff;
}
.tree .cur td:first-child {
    outline: 2px solid #808080;
    outline-offset: -2px;
}
.dv {
    padding-top: 14px;
}
.dv i {
    height: 105px;
}
.pv {
    padding-top: 14px;
}
.pv i {
    height: 285px;
}
.hscroll {
    display: flex;
    align-items: center;
    flex: none;
    height: 14px;
    background: #fff;
}
.hscroll i {
    height: 8px;
}
.hscroll b {
    border: 4px solid transparent;
}
.hscroll .l {
    border-left-width: 0;
    border-right-color: #555;
    margin: 0 5px;
}
.hscroll .r {
    border-right-width: 0;
    border-left-color: #555;
    margin-left: auto;
    margin-right: 18px;
}
.dh i {
    width: 158px;
}

.prop {
    width: 264px;
}
.prop th {
    width: 22px;
    height: 21px;
}
.prop th + th {
    width: 101px;
}
.prop th + th + th {
    width: 141px;
}
.prop tbody th {
    background: #efefef;
    border-color: #c8c8c8;
}
.prop td {
    height: 21px;
    padding-left: 3px;
}
.prop td:nth-child(2) {
    color: #1a5cff;
}
.prop .ro td:nth-child(2) {
    color: inherit;
}
.prop .calc td:last-child {
    color: #999;
}
.hrb {
    width: 12px;
    height: 12px;
}

/* vertical splitter */
.splitter {
    display: flex;
    align-items: flex-start;
    width: 4px;
    padding-top: 161px;
}
.splitter button, .gap button {
    justify-content: center;
    width: 4px;
    height: 100px;
    background: #5e6a78;
    color: #ccc;
    font-size: 8px;
    overflow: hidden;
}

/* drawing area */
.work {
    display: flex;
    flex-direction: column;
    flex: 1;
    min-width: 0;
    padding-top: 1px;
}
.canvas {
    position: relative;
    flex: 1;
    min-height: 0;
    background: #000;
    overflow: hidden;
}
.plan {
    display: block;
    width: 100%;
    height: 100%;
}
.plan path {
    stroke-width: 1;
}
.plan .w2 { stroke-width: 2; }
.plan .w4 { stroke-width: 4; }
.g1, .g2, .g3, .gy, .lc, .cy, .ye, .rd, .dr, .wl {
    fill: none;
}
.g1 { stroke: #00ff00; }
.g2 { stroke: #00b800; }
.g3 { stroke: #007800; }
.gy { stroke: #808080; }
.lc { stroke: #46d2ff; }
.cy { stroke: #00ffff; }
.ye { stroke: #ffff00; }
.rd { stroke: #ff0000; }
.dr { stroke: #900000; }
.wl { stroke: #ffffff; }
.ds { stroke-dasharray: 14 8; }
.ds2 { stroke-dasharray: 64 8 8 8; }
.ds3 { stroke-dasharray: 14 70; }
.plan text {
    fill: #fff;
}
.axis circle {
    fill: none;
    stroke: #006c00;
}
.plan .axt, .plan .cad, .plan .big {
    text-anchor: middle;
}
.axt, .big {
    font-size: 17px;
}
.cad, .cadl {
    font: 11px "Liberation Sans Narrow", "DejaVu Sans Condensed", sans-serif;
}
.cadl {
    font-size: 9px;
}
.mid6 {
    font-size: 13px;
}
.note {
    font: 9px "Open Sans", sans-serif;
}
.plan .dim text { fill: #9a9a9a; }
.plan .mg text { fill: #c030c0; }
.plan .yl text { fill: #ffff00; }
.plan .ax {
    font-size: 14px;
    fill: #ff0000;
}
.plan .ay {
    fill: #00ff00;
}
.tip {
    position: absolute;
    left: 0;
    right: 0;
    bottom: 0;
    display: flex;
    align-items: center;
    justify-content: center;
    gap: 3px;
    height: 27px;
    padding-left: 138px;
    background: rgba(56, 56, 56, 0.8);
    color: #fff;
    font-weight: 500;
}
.gap {
    display: flex;
    justify-content: center;
    height: 4px;
    padding-left: 139px;
    background: #f8f8f8;
}
.gap button {
    width: 100px;
    height: 4px;
}

/* rebar editor */
.dock {
    flex: none;
    border: 1px solid #d4d4d4;
    border-right: 0;
    background: #fff;
    overflow: hidden;
}
.dock .strip {
    height: 11px;
}
.dock h2 {
    margin: 0;
    height: 22px;
    padding-left: 8px;
    background: #f1f1f1;
    border-bottom: 1px solid #d6d6d6;
    color: #777;
    font-size: 12px;
    font-weight: 500;
    line-height: 22px;
}
.dtools {
    display: flex;
    align-items: center;
    gap: 12px;
    height: 29px;
    padding: 1px 0 0 5px;
    border-bottom: 1px solid #d6d6d6;
    white-space: nowrap;
}
.dtools button {
    gap: 4px;
}
.dtools .n {
    margin-right: 4px;
}
.gridwrap {
    overflow: hidden;
    background: #c2dfe1;
}
.bars {
    width: 1046px;
}
.w14 { width: 14px; }
.w33 { width: 33px; }
.w36 { width: 36px; }
.w38 { width: 38px; }
.w39 { width: 39px; }
.w49 { width: 49px; }
.w56 { width: 56px; }
.w61 { width: 61px; }
.w71 { width: 71px; }
.w73 { width: 73px; }
.w166 { width: 166px; }
.w215 { width: 215px; }
.bars thead th {
    height: 21px;
    background: #fff;
}
.bars thead .hl {
    background: #7fb9fa;
}
.bars tbody th {
    background: #efefef;
    border-color: #c8c8c8;
}
.bars td {
    height: 46px;
    padding: 0 2px 3px 3px;
    border-color: #d8dcdc;
    background: #c2dfe1;
    color: #000;
    font: 10px/14px "DejaVu Sans Mono", monospace;
}
.bars .t {
    font: 12px/14px "Noto Sans CJK SC", sans-serif;
    white-space: normal;
}
.lv {
    width: 12px;
    height: 12px;
    display: block;
    margin: 3px 0 0 2px;
}
.shape {
    height: 18px;
    margin: 4px 0 0 15px;
    padding-left: 5px;
    border-bottom: 2px solid #000;
    color: #f00;
    font: 12px/14px "Liberation Mono", monospace;
    text-align: center;
}
.hook {
    display: flex;
    align-items: flex-end;
    gap: 6px;
    padding-left: 12px;
    font: 12px/14px "Liberation Mono", monospace;
}
.hook .shape {
    flex: 1;
    margin: 2px 0 0;
    padding-right: 8px;
    border-left: 2px solid #000;
}
.bars .cur th {
    background: #7fb9fa;
    color: #fff;
    font-weight: 700;
}
.bars .edit {
    position: relative;
    padding: 0;
    border: 2px solid #6aa6e8;
}
.edit input {
    width: 100%;
    height: 42px;
    padding: 0 2px;
    border: 0;
    background: none;
    font: 12px "Noto Sans", sans-serif;
}
.edit::after {
    content: "";
    position: absolute;
    inset: 4px -2px 0 0;
    border: 3px solid #ff2418;
    border-radius: 4px;
    pointer-events: none;
}
.bh {
    height: 14px;
}
.bh i {
    width: 80%;
}
```
